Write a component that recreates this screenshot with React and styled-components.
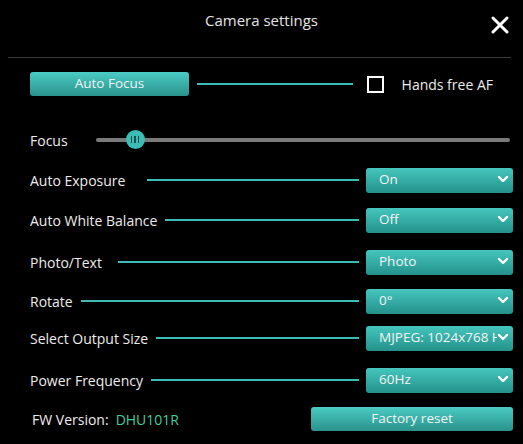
import React from "react"
import styled, { createGlobalStyle } from "styled-components"

const teal = "#3bbdb5"

const Global = createGlobalStyle`
  html, body {
    margin: 0;
    padding: 0;
    background: #000;
  }
  body {
    font-family: "Open Sans", "Noto Sans", "DejaVu Sans", sans-serif;
    color: #ececec;
  }
`

const Panel = styled.div`
  width: 523px;
  height: 444px;
  background: #000;
  overflow: hidden;
`

const Header = styled.div`
  height: 57px;
  position: relative;
  display: flex;
  justify-content: center;
  align-items: flex-start;
`

const Title = styled.div`
  font-size: 15px;
  color: #e4e4e4;
  margin-top: 10px;
`

const Close = styled.div`
  position: absolute;
  right: 14px;
  top: 16px;
  width: 18px;
  height: 18px;
`

const Divider = styled.div`
  height: 1px;
  background: #3a3a3a;
  margin: 0 12px 0 8px;
`

const Body = styled.div`
  padding: 0 10px 0 30px;
  display: flex;
  flex-direction: column;
`

const Row = styled.div`
  display: flex;
  align-items: center;
  height: 30px;
  margin-top: ${p => p.$gap}px;
`

const Label = styled.div`
  font-size: 14px;
  white-space: nowrap;
  margin-right: ${p => p.$trail || 0}px;
`

const Line = styled.div`
  flex: 1;
  height: 2px;
  background: ${teal};
  margin: 0 ${p => p.$tail || 7}px 0 ${p => p.$lead || 8}px;
`

const TealButton = styled.div`
  width: ${p => p.$w}px;
  height: 24px;
  border-radius: 3px;
  background: linear-gradient(#4accc4, #2a928c);
  color: #f2f2f2;
  font-size: 13.5px;
  display: flex;
  align-items: center;
  justify-content: center;
  padding-bottom: 3px;
  box-sizing: border-box;
`

const Check = styled.div`
  width: 17px;
  height: 17px;
  border: 2px solid #fff;
  box-sizing: border-box;
  margin-right: 18px;
`

const Track = styled.div`
  flex: 1;
  height: 4px;
  border-radius: 2px;
  background: #7a7a7a;
  margin: 0 3px 0 28px;
  position: relative;
`

const Thumb = styled.div`
  position: absolute;
  left: 30px;
  top: -8px;
  width: 19px;
  height: 19px;
  border-radius: 50%;
  background: ${teal};
  display: flex;
  align-items: center;
  justify-content: center;
  gap: 2px;
`

const Grip = styled.span`
  width: 1.5px;
  height: 7px;
  background: #1b4f4b;
`

const Select = styled.div`
  width: 147px;
  height: 25px;
  border-radius: 3px;
  background: linear-gradient(#45c6be, #24918b);
  display: flex;
  align-items: center;
  box-sizing: border-box;
  padding: 0 4px 2px 13px;
  color: #f4f4f4;
  font-size: 13.5px;
  overflow: hidden;
`

const Value = styled.span`
  flex: 1;
  white-space: nowrap;
  overflow: hidden;
`

const Version = styled.span`
  color: #3fcf9e;
  margin-left: 7px;
`

const Chevron = () => (
  <svg width="12" height="10" viewBox="0 0 12 10" style={{ flexShrink: 0 }}>
    <polyline points="2,3 6,7 10,3" fill="none" stroke="#fff" strokeWidth="2.4" strokeLinecap="round" strokeLinejoin="round" />
  </svg>
)

const rows = [
  { label: "Auto Exposure", value: "On", gap: 10, lead: 22 },
  { label: "Auto White Balance", value: "Off", gap: 10 },
  { label: "Photo/Text", value: "Photo", gap: 12, lead: 16 },
  { label: "Rotate", value: "0°", gap: 9 },
  { label: "Select Output Size", value: "MJPEG: 1024x768 H", gap: 7 },
  { label: "Power Frequency", value: "60Hz", gap: 12 },
]

export default function App() {
  return (
    <Panel>
      <Global />
      <Header>
        <Title>Camera settings</Title>
        <Close>
          <svg width="18" height="18" viewBox="0 0 18 18">
            <path d="M2 2 L16 16 M16 2 L2 16" stroke="#fff" strokeWidth="3" strokeLinecap="round" />
          </svg>
        </Close>
      </Header>
      <Divider />
      <Body>
        <Row $gap={11}>
          <TealButton $w={159}>Auto Focus</TealButton>
          <Line $tail={14} />
          <Check />
          <Label $trail={20}>Hands free AF</Label>
        </Row>
        <Row $gap={26}>
          <Label>Focus</Label>
          <Track>
            <Thumb>
              <Grip />
              <Grip />
              <Grip />
            </Thumb>
          </Track>
        </Row>
        {rows.map(r => (
          <Row key={r.label} $gap={r.gap}>
            <Label>{r.label}</Label>
            <Line $lead={r.lead} />
            <Select>
              <Value>{r.value}</Value>
              <Chevron />
            </Select>
          </Row>
        ))}
        <Row $gap={9}>
          <Label style={{ marginLeft: 2 }}>
            FW Version:<Version>DHU101R</Version>
          </Label>
          <div style={{ flex: 1 }} />
          <TealButton $w={202}>Factory reset</TealButton>
        </Row>
      </Body>
    </Panel>
  )
}
